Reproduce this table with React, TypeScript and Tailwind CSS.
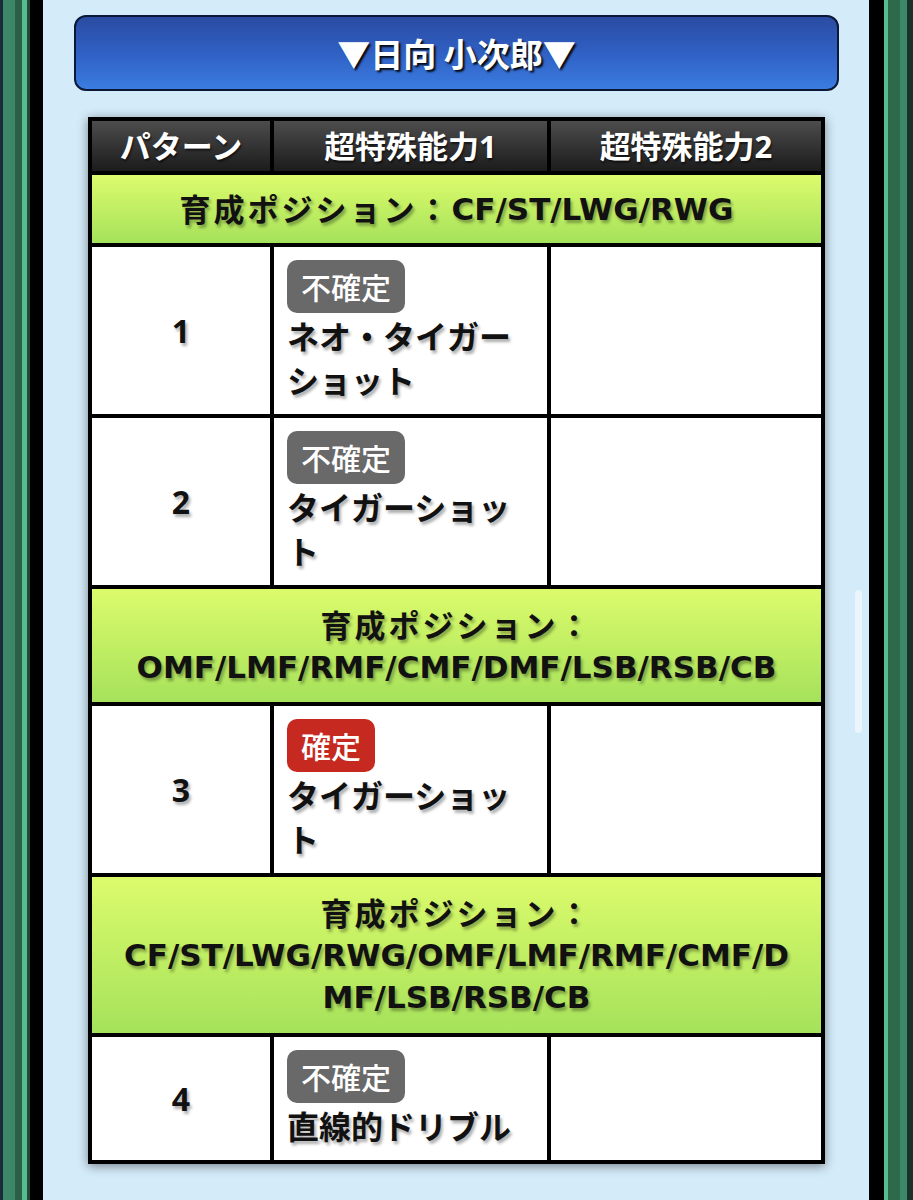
import React from "react";

const cjk = "[font-family:'Noto_Sans_CJK_JP','Noto_Sans',sans-serif]";
const latin = "[font-family:'DejaVu_Sans','Noto_Sans_CJK_JP',sans-serif]";
const numFont = "[font-family:'Noto_Sans','Noto_Sans_CJK_JP',sans-serif]";
const darkShadow = "[text-shadow:2px_3px_3px_rgba(0,0,0,0.32)]";

type Line = { jp?: string; en?: string };
type Row =
  | { kind: "group"; pad: string; lines: Line[] }
  | { kind: "data"; no: string; sure: boolean; lines: string[] };

const rows: Row[] = [
  { kind: "group", pad: "py-[13px]", lines: [{ jp: "育成ポジション：", en: "CF/ST/LWG/RWG" }] },
  { kind: "data", no: "1", sure: false, lines: ["ネオ・タイガー", "ショット"] },
  { kind: "data", no: "2", sure: false, lines: ["タイガーショッ", "ト"] },
  {
    kind: "group",
    pad: "pt-[15px] pb-[14px]",
    lines: [{ jp: "育成ポジション：" }, { en: "OMF/LMF/RMF/CMF/DMF/LSB/RSB/CB" }],
  },
  { kind: "data", no: "3", sure: true, lines: ["タイガーショッ", "ト"] },
  {
    kind: "group",
    pad: "py-[15px]",
    lines: [
      { jp: "育成ポジション：" },
      { en: "CF/ST/LWG/RWG/OMF/LMF/RMF/CMF/D" },
      { en: "MF/LSB/RSB/CB" },
    ],
  },
  { kind: "data", no: "4", sure: false, lines: ["直線的ドリブル"] },
];

function Badge({ sure }: { sure: boolean }) {
  return (
    <span
      className={`inline-block h-[53px] rounded-[10px] px-[14px] text-[30px] font-medium leading-[53px] text-white ${cjk} ${
        sure ? "bg-[#c5291f]" : "bg-[#696969]"
      }`}
    >
      {sure ? "確定" : "不確定"}
    </span>
  );
}

export default function App() {
  return (
    <div className="flex h-[1200px] w-full overflow-hidden bg-black">
      <div className="flex shrink-0">
        <div className="w-[3px] bg-[#1b2b3b]" />
        <div className="w-[12px] bg-[#3b8767]" />
        <div className="w-[7px] bg-[#2b5f47]" />
        <div className="w-[5px] bg-[#58bd8e]" />
        <div className="w-[3px] bg-[#24493a]" />
        <div className="w-[13px] bg-black" />
      </div>

      <main className="relative flex-1 bg-[#d4ebf9] pl-[31px] pr-[30px] pt-[15px]">
        <div
          className={`flex h-[76px] items-center justify-center rounded-[12px] border-2 border-[#0c1838] bg-linear-to-b from-[#2a4ca2] via-[#3060c4] to-[#3b7ce0] pt-[2px] text-[33px] font-bold text-white [text-shadow:2px_2px_2px_rgba(0,0,0,0.9)] ${cjk}`}
        >
          ▼日向 小次郎▼
        </div>

        <div className="mx-[14px] mt-[26px] grid grid-cols-[178px_273px_270px] gap-[4px] bg-black p-[4px] shadow-[0_2px_10px_rgba(0,0,0,0.45)]">
          {["パターン", "超特殊能力1", "超特殊能力2"].map((h) => (
            <div
              key={h}
              className={`flex h-[50px] items-center justify-center bg-linear-to-b from-[#4d4d4d] to-[#1c1c1c] text-[31px] font-bold text-white [text-shadow:1px_2px_2px_rgba(0,0,0,0.6)] ${numFont}`}
            >
              {h}
            </div>
          ))}

          {rows.map((r, i) =>
            r.kind === "group" ? (
              <div
                key={i}
                className={`col-span-3 flex flex-col items-center bg-linear-to-b from-[#dcfb6c] to-[#a5e25b] ${r.pad} font-bold text-[#111] ${darkShadow}`}
              >
                {r.lines.map((l, j) => (
                  <div
                    key={j}
                    className="flex h-[42px] items-center whitespace-nowrap text-[31px] leading-[42px]"
                  >
                    {l.jp && <span className={`tracking-[3px] ${numFont}`}>{l.jp}</span>}
                    {l.en && <span className={latin}>{l.en}</span>}
                  </div>
                ))}
              </div>
            ) : (
              <React.Fragment key={i}>
                <div
                  className={`flex items-center justify-center bg-white text-[32px] font-bold text-[#111] ${darkShadow} ${numFont}`}
                >
                  {r.no}
                </div>
                <div className="bg-white pb-[13px] pl-[13px] pr-[8px] pt-[13px]">
                  <Badge sure={r.sure} />
                  <div
                    className={`text-[32px] font-bold leading-[44px] whitespace-nowrap text-[#111] ${darkShadow} ${cjk}`}
                  >
                    {r.lines.map((l, j) => (
                      <div key={j} className="h-[44px]">
                        {l}
                      </div>
                    ))}
                  </div>
                </div>
                <div className="bg-white" />
              </React.Fragment>
            )
          )}
        </div>

        <div className="absolute left-[812px] top-[590px] h-[143px] w-[7px] rounded-full bg-[#eaf5fd]" />
      </main>

      <div className="flex shrink-0">
        <div className="w-[15px] bg-black" />
        <div className="w-[4px] bg-[#58bd8e]" />
        <div className="w-[12px] bg-[#2d6a4c]" />
        <div className="w-[7px] bg-[#3b8767]" />
        <div className="w-[6px] bg-[#1c2f2a]" />
      </div>
    </div>
  );
}
